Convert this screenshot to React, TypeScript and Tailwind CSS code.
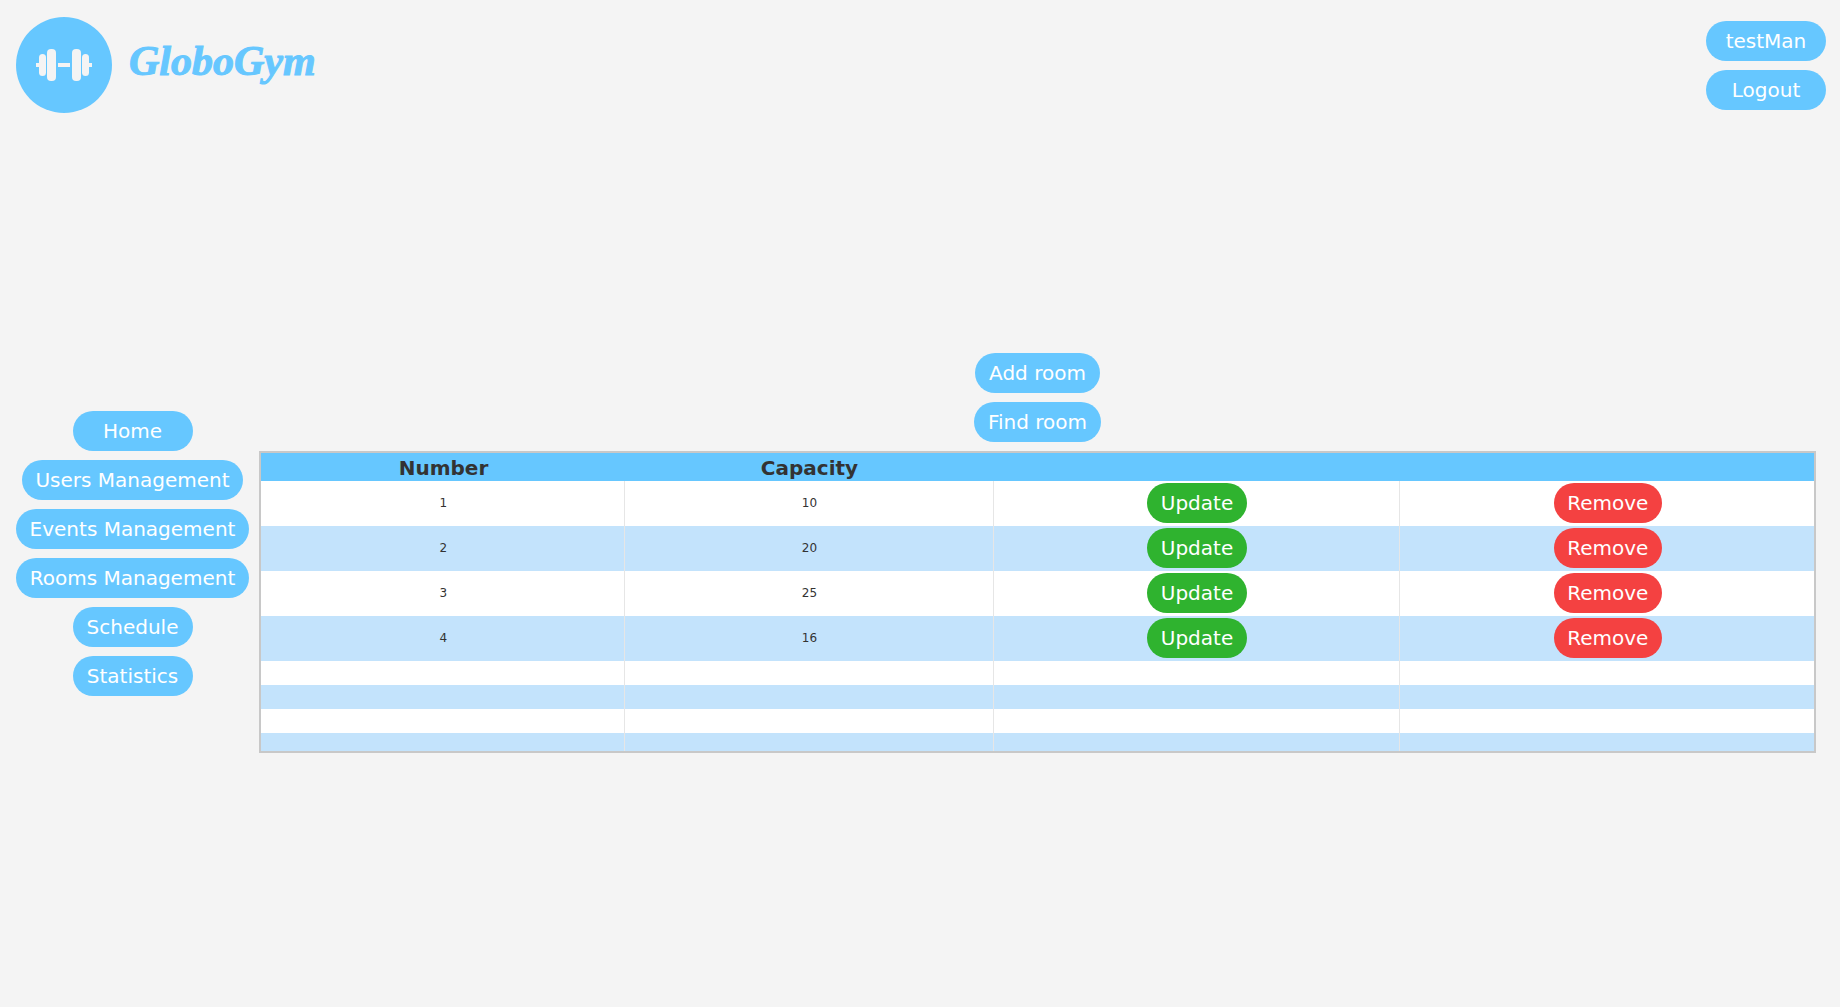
import React from 'react';

const font = { fontFamily: '"DejaVu Sans", sans-serif' };

const rooms = [
  { number: 1, capacity: 10 },
  { number: 2, capacity: 20 },
  { number: 3, capacity: 25 },
  { number: 4, capacity: 16 },
];

function Pill({ label, color = 'bg-[#66c7ff]' }: { label: string; color?: string }) {
  return (
    <button className={`mx-auto block h-10 rounded-[20px] ${color} px-[13.6px] text-[20px] text-white whitespace-nowrap`}>
      {label}
    </button>
  );
}

function NavPill({ label }: { label: string }) {
  return (
    <button className="h-10 min-w-[120px] rounded-[20px] bg-[#66c7ff] px-[13.6px] text-[20px] text-white whitespace-nowrap">
      {label}
    </button>
  );
}

function Logo() {
  return (
    <div className="flex h-24 w-24 items-center justify-center rounded-full bg-[#66c7ff]">
      <svg width="56" height="32" viewBox="0 0 56 32" fill="#f4f4f4">
        <rect x="0" y="14" width="4" height="4" />
        <rect x="3" y="5" width="7" height="22" rx="3.5" />
        <rect x="11" y="0" width="9" height="32" rx="4" />
        <rect x="22" y="14" width="12" height="4" />
        <rect x="36" y="0" width="9" height="32" rx="4" />
        <rect x="46" y="5" width="7" height="22" rx="3.5" />
        <rect x="53" y="14" width="3" height="4" />
      </svg>
    </div>
  );
}

export default function App() {
  return (
    <div className="min-h-screen bg-[#f4f4f4]" style={font}>
      <header className="flex h-[129px] items-start justify-between pl-4 pr-[14px] pt-[17px]">
        <div className="flex items-center gap-[17px]">
          <Logo />
          <span
            className="pb-2 text-[42px] leading-none font-bold italic text-[#66c7ff] [-webkit-text-stroke:1px_#66c7ff]"
            style={{ fontFamily: '"Liberation Serif", serif' }}
          >
            GloboGym
          </span>
        </div>
        <div className="flex flex-col gap-[9px] pt-1">
          <NavPill label="testMan" />
          <NavPill label="Logout" />
        </div>
      </header>

      <main className="mt-[224px] flex items-center gap-[10px] pl-4 pr-6">
        <nav className="flex w-[233px] shrink-0 flex-col items-center gap-[9px]">
          <NavPill label="Home" />
          <NavPill label="Users Management" />
          <NavPill label="Events Management" />
          <NavPill label="Rooms Management" />
          <NavPill label="Schedule" />
          <NavPill label="Statistics" />
        </nav>

        <section className="flex min-w-0 flex-1 flex-col items-center">
          <div className="mb-[9px] flex flex-col items-center gap-[9px]">
            <Pill label="Add room" />
            <Pill label="Find room" />
          </div>
          <div className="h-[302px] w-full overflow-hidden border-2 border-[#c8c8c8] bg-white">
            <table className="w-full table-fixed border-collapse">
              <colgroup>
                <col className="w-[363px]" />
                <col className="w-[369px]" />
                <col className="w-[406px]" />
                <col />
              </colgroup>
              <thead>
                <tr className="h-[28px] bg-[#66c7ff] text-[20px] leading-6 font-bold text-[#333333]">
                  <th className="pt-[2px] pl-[2px]">Number</th>
                  <th className="pt-[2px] pl-[2px]">Capacity</th>
                  <th></th>
                  <th></th>
                </tr>
              </thead>
              <tbody>
                {rooms.map((room, i) => (
                  <tr key={room.number} className={`h-[45px] text-center text-[12px] text-[#333333] ${i % 2 ? 'bg-[#c3e3fc]' : 'bg-white'}`}>
                    <td className="border-r border-[#e6e6e6] pt-[2px] pb-[3px] pl-[2px]">{room.number}</td>
                    <td className="border-r border-[#e6e6e6] pt-[2px] pb-[3px] pl-[2px]">{room.capacity}</td>
                    <td className="border-r border-[#e6e6e6] pt-[2px] pb-[3px] pl-[2px]"><Pill label="Update" color="bg-[#2fb32f]" /></td>
                    <td className="pt-[2px] pb-[3px] pl-[2px]"><Pill label="Remove" color="bg-[#f44141]" /></td>
                  </tr>
                ))}
                {[0, 1, 2, 3].map((i) => (
                  <tr key={i} className={`h-6 ${i % 2 ? 'bg-[#c3e3fc]' : 'bg-white'}`}>
                    <td className="border-r border-[#e6e6e6]"></td>
                    <td className="border-r border-[#e6e6e6]"></td>
                    <td className="border-r border-[#e6e6e6]"></td>
                    <td></td>
                  </tr>
                ))}
              </tbody>
            </table>
          </div>
        </section>
      </main>
    </div>
  );
}
